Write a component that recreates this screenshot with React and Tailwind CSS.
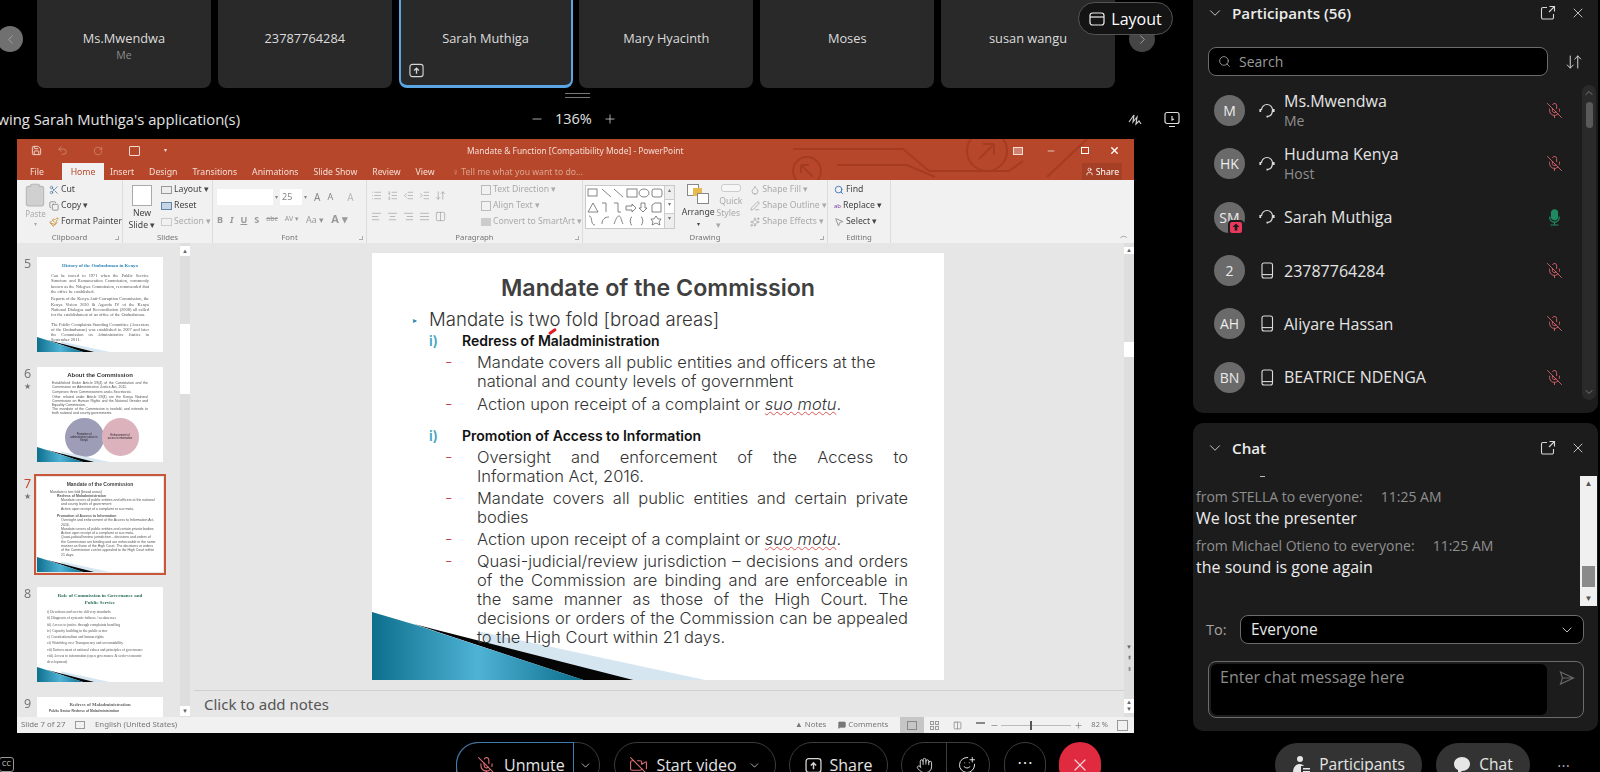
import {
  AlignCenter, AlignJustify, AlignLeft, AlignRight, ArrowDownUp, ChevronDown, ChevronLeft, ChevronRight,
  Clipboard, Columns2, Copy, Hand, IndentDecrease, IndentIncrease, List, ListOrdered, MicOff,
  Minus, MousePointer2, Paintbrush, Plus, Save, Scissors, Search, SmilePlus, Undo2, RotateCw, VideoOff, X,
  MessageSquare, Droplet, PenLine, Sparkles, User,
} from 'lucide-react';

const participants = [
  { initials: 'M', name: 'Ms.Mwendwa', sub: 'Me', device: 'headset' },
  { initials: 'HK', name: 'Huduma Kenya', sub: 'Host', device: 'headset' },
  { initials: 'SM', name: 'Sarah Muthiga', device: 'headset', sharing: true, live: true },
  { initials: '2', name: '23787764284', device: 'phone' },
  { initials: 'AH', name: 'Aliyare Hassan', device: 'phone' },
  { initials: 'BN', name: 'BEATRICE NDENGA', device: 'phone' },
];

const slideLines = [
  { kind: 'lead', text: 'Mandate is two fold [broad areas]' },
  { kind: 'head', text: 'Redress of Maladministration' },
  { kind: 'item', text: 'Mandate covers all public entities and officers at the', dash: true, gap: 'mt-[3px]' },
  { kind: 'item', text: 'national and county levels of government' },
  { kind: 'motu', dash: true, gap: 'mt-[4px]' },
  { kind: 'head', text: 'Promotion of Access to Information', gap: 'mt-[12px]' },
  { kind: 'item', text: 'Oversight and enforcement of the Access to', dash: true, wide: true, gap: 'mt-[3px]' },
  { kind: 'item', text: 'Information Act, 2016.' },
  { kind: 'item', text: 'Mandate covers all public entities and certain private', dash: true, wide: true, gap: 'mt-[3px]' },
  { kind: 'item', text: 'bodies' },
  { kind: 'motu', dash: true, gap: 'mt-[3px]' },
  { kind: 'item', text: 'Quasi-judicial/review jurisdiction – decisions and orders', dash: true, wide: true, gap: 'mt-[3px]' },
  { kind: 'item', text: 'of the Commission are binding and are enforceable in', wide: true },
  { kind: 'item', text: 'the same manner as those of the High Court. The', wide: true },
  { kind: 'item', text: 'decisions or orders of the Commission can be appealed', wide: true },
  { kind: 'item', text: 'to the High Court within 21 days.' },
];

function PopOut() {
  return (
    <svg width="16" height="16" viewBox="0 0 16 16" fill="none" stroke="#d8d8d8" strokeWidth="1.1">
      <path d="M7 2.500H3a1.500 1.500 0 0 0-1.500 1.500v8.500A1.500 1.500 0 0 0 3 14h9a1.500 1.500 0 0 0 1.500-1.500V9" />
      <path d="M9.500 1.500h5v5M14.500 1.500 9 7" />
    </svg>
  );
}

function Headset() {
  return (
    <svg width="16" height="18" viewBox="0 0 16 18" fill="none" stroke="#dcdcdc" strokeWidth="1.2">
      <path d="M2.500 8a5.500 5.500 0 0 1 11 0c0 3.500-1.800 6-4.500 6.400" />
      <path d="M1.300 7v3M14.700 7v3" strokeWidth="1.8" />
      <path d="M7.500 14.600h1.600" strokeWidth="1.8" />
    </svg>
  );
}

function Phone() {
  return (
    <svg width="14" height="17" viewBox="0 0 14 17" fill="none" stroke="#dcdcdc" strokeWidth="1.1">
      <rect x="2" y="1" width="10.500" height="15" rx="2" />
      <path d="M2 12.600h10.500" />
    </svg>
  );
}

function LiveMic() {
  return (
    <svg width="17" height="17" viewBox="0 0 17 17" fill="none" stroke="#1f8a62" strokeWidth="1.2">
      <rect x="5.500" y="0.800" width="6" height="10" rx="3" fill="#1f8a62" />
      <path d="M3.800 7.500v1a4.700 4.700 0 0 0 9.400 0v-1M8.500 13.200v2.500M4.500 16h8" />
    </svg>
  );
}

function ShareBox({ size = 15, color = '#d5d5d5' }) {
  return (
    <svg width={size} height={size} viewBox="0 0 16 16" fill="none" stroke={color} strokeWidth="1.2">
      <rect x="1" y="1.500" width="14" height="13" rx="2.500" />
      <path d="M8 11.500V5.500M5.500 8 8 5.500 10.500 8" strokeWidth="1.4" />
    </svg>
  );
}

function Card({ name, sub, selected, sharing }) {
  return (
    <div
      className={`relative flex h-full w-[174px] flex-col items-center rounded-b-[8px] bg-[#292929] pt-[29px] ${
        selected ? 'border-x-[2.5px] border-b-[3px] border-[#5aa5e2]' : ''
      }`}
    >
      <div className="text-[12.8px] leading-[18px] text-[#dcdcdc]">{name}</div>
      <div className="text-[10.5px] leading-[16px] text-[#8d8d8d]">{sub}</div>
      {sharing && (
        <div className="absolute bottom-[7px] left-[8px]">
          <ShareBox />
        </div>
      )}
    </div>
  );
}

function NavArrow({ side }) {
  const Icon = side === 'left' ? ChevronLeft : ChevronRight;
  return (
    <div
      className={`absolute top-[26px] flex h-[26px] w-[26px] items-center justify-center rounded-full ${
        side === 'left' ? 'left-[-3px] bg-[#707070]' : 'left-[1129px] bg-[#454545]'
      }`}
    >
      <Icon size={15} color="#a8a8a8" strokeWidth={1.4} />
    </div>
  );
}

// ---- PowerPoint window (blurry video frame of a shared app)

function TitleBar() {
  return (
    <div className="relative flex h-[24px] items-center text-[#f3dcd4]">
      <svg className="absolute left-[740px] top-0" width="377" height="41" viewBox="0 0 377 41" fill="none" stroke="#a53c22" strokeWidth="2">
        <circle cx="50" cy="32" r="14" />
        <path d="M44 26l12 12M44 26h8M44 26v8" />
        <circle cx="230" cy="12" r="20" />
        <path d="M222 20l15-15M237 5h-11M237 5v11" />
        <path d="M36 10h110l26 22h80l14-10M80 26h70l28 12M290 38l40-38" />
      </svg>
      <div className="relative flex w-full items-center">
        <Save size={11} className="ml-[14px]" />
        <Undo2 size={11} className="ml-[15px] opacity-40" />
        <RotateCw size={10} className="ml-[25px] opacity-40" />
        <div className="ml-[26px] h-[10px] w-[11px] rounded-[1px] border border-[#f3dcd4]" />
        <div className="ml-[24px] text-[6px]">▾</div>
        <div className="ml-[300px] w-[240px] whitespace-nowrap text-[8.4px]">Mandate &amp; Function [Compatibility Mode] - PowerPoint</div>
        <div className="ml-[306px] h-[8px] w-[10px] border border-[#f3dcd4] bg-[#f3dcd4]/40" />
        <Minus size={10} className="ml-[23px]" />
        <div className="ml-[25px] h-[7px] w-[8px] border border-white" />
        <X size={11} strokeWidth={3} className="ml-[20px] text-white" />
      </div>
    </div>
  );
}

function TabBar() {
  const tabs = ['Insert', 'Design', 'Transitions', 'Animations', 'Slide Show', 'Review', 'View'];
  return (
    <div className="relative flex h-[17px] items-end text-[8.7px] leading-[16px] text-[#f4ddd5]">
      <div className="ml-[13px] w-[32px]">File</div>
      <div className="flex h-[17px] w-[42px] items-center justify-center bg-[#f1f1f1] text-[#b7472a]">Home</div>
      <div className="ml-[6px] flex gap-[15px]">
        {tabs.map((tab) => (
          <span key={tab}>{tab}</span>
        ))}
      </div>
      <span className="ml-[18px] text-[#dba693]">♀ Tell me what you want to do...</span>
      <div className="absolute right-[12px] top-0 flex h-[17px] w-[40px] items-center justify-center gap-[2px] bg-[#a53f26] text-white">
        <User size={9} />
        Share
      </div>
    </div>
  );
}

function RibbonGroup({ width, label, children, corner }) {
  return (
    <div className={`relative flex ${width} flex-col border-r border-[#dcdcdc]`}>
      <div className="flex h-[51px] pt-[2px]">{children}</div>
      <div className="h-[12px] text-center text-[7.8px] leading-[12px] text-[#777]">{label}</div>
      {corner && <div className="absolute bottom-[3px] right-[3px] h-[4px] w-[4px] border-b border-r border-[#aaa]" />}
    </div>
  );
}

function RibbonRow({ icon, text, muted }) {
  return (
    <div className={`flex h-[16px] items-center gap-[2px] whitespace-nowrap text-[8.7px] ${muted ? 'text-[#aaa]' : 'text-[#444]'}`}>
      {icon}
      {text}
    </div>
  );
}

function ShapesGallery() {
  return (
    <div className="flex h-[44px] w-[90px] border border-[#c9c9c9] bg-white">
      <svg width="78" height="42" viewBox="0 0 78 42" fill="none" stroke="#666" strokeWidth="0.8">
        <rect x="2" y="3" width="9" height="7" />
        <path d="M16 3l9 8M28 3l9 8" />
        <rect x="41" y="3" width="10" height="8" />
        <ellipse cx="58" cy="7" rx="5" ry="4" />
        <rect x="66" y="3" width="10" height="8" rx="2" />
        <path d="M2 26l5-9 5 9zM16 17h4v9M28 17h4v9h3" />
        <path d="M40 20h6v-2l4 4-4 4v-2h-6zM55 17h4v5h2l-4 4-4-4h2z" />
        <path d="M66 26v-7l3-2h6v9z" />
        <path d="M3 30c4 0 1 9 6 9M16 38c0-5 3-7 7-7M28 38c2-5 3-8 5-8s2 4 4 8M46 31c-2 0-1 3-2 4 1 1 0 4 2 4M55 31c2 0 1 3 2 4-1 1 0 4-2 4M70 30l2 3h3l-2 3 1 3-4-2-4 2 1-3-2-3h3z" />
      </svg>
      <div className="flex flex-1 flex-col border-l border-[#ccc] bg-[#eee] text-center text-[6px] text-[#777]">
        <span className="h-[14px] border-b border-[#ccc]">▴</span>
        <span className="h-[14px] border-b border-[#ccc] bg-white">▾</span>
        <span>▾</span>
      </div>
    </div>
  );
}

function Ribbon() {
  const iconGray = { size: 11, color: '#9b9b9b', strokeWidth: 1.4 };
  return (
    <div className="flex h-[63px] bg-[#f1f1f1]">
      <RibbonGroup width="w-[106px]" label="Clipboard" corner>
        <div className="flex w-[33px] flex-col items-center pl-[5px] text-[8px] leading-[11px] text-[#aaa]">
          <Clipboard size={26} color="#b8b8b8" fill="#d0d0d0" strokeWidth={1} />
          <span>Paste</span>
          <span className="text-[6px]">▾</span>
        </div>
        <div>
          <RibbonRow icon={<Scissors size={10} color="#6083a8" />} text="Cut" />
          <RibbonRow icon={<Copy size={10} color="#888" />} text="Copy  ▾" />
          <RibbonRow icon={<Paintbrush size={10} color="#c68a2e" />} text="Format Painter" />
        </div>
      </RibbonGroup>
      <RibbonGroup width="w-[90px]" label="Slides">
        <div className="flex w-[38px] flex-col items-center text-[8.7px] leading-[12px] text-[#444]">
          <div className="mb-[1px] mt-[3px] h-[21px] w-[20px] border border-[#aaa] bg-white" />
          <span>New</span>
          <span>Slide ▾</span>
        </div>
        <div>
          <RibbonRow icon={<div className="h-[8px] w-[11px] border border-[#999] bg-[#eee]" />} text="Layout ▾" />
          <RibbonRow icon={<div className="h-[8px] w-[11px] border border-[#6083a8] bg-[#c6d6e6]" />} text="Reset" />
          <RibbonRow muted icon={<div className="h-[8px] w-[11px] border border-[#ccc]" />} text="Section ▾" />
        </div>
      </RibbonGroup>
      <RibbonGroup width="w-[154px]" label="Font" corner>
        <div className="pl-[4px] pt-[7px]">
          <div className="flex items-center gap-[2px] text-[9px] text-[#888]">
            <div className="h-[16px] w-[56px] bg-white" />
            <span className="text-[6px]">▾</span>
            <div className="h-[16px] w-[22px] bg-white pl-[2px] leading-[16px]">25</div>
            <span className="text-[6px]">▾</span>
            <span className="ml-[5px] text-[10px]">A</span>
            <span className="ml-[5px] text-[9px]">A</span>
            <span className="ml-[12px] text-[10px] text-[#bbb]">A</span>
          </div>
          <div className="mt-[6px] flex items-center gap-[7px] text-[9px] font-bold text-[#999]">
            <span>B</span>
            <span className="italic">I</span>
            <span className="underline">U</span>
            <span>S</span>
            <span className="text-[7px] font-normal line-through">abc</span>
            <span className="text-[7px] font-normal">AV ▾</span>
            <span className="font-normal">Aa ▾</span>
            <span className="text-[11px]">A ▾</span>
          </div>
        </div>
      </RibbonGroup>
      <RibbonGroup width="w-[216px]" label="Paragraph" corner>
        <div className="pl-[4px] pt-[8px]">
          <div className="flex gap-[5px]">
            <List {...iconGray} />
            <ListOrdered {...iconGray} />
            <IndentDecrease {...iconGray} />
            <IndentIncrease {...iconGray} />
            <ArrowDownUp {...iconGray} />
          </div>
          <div className="mt-[10px] flex gap-[5px]">
            <AlignLeft {...iconGray} />
            <AlignCenter {...iconGray} />
            <AlignRight {...iconGray} />
            <AlignJustify {...iconGray} />
            <Columns2 {...iconGray} />
          </div>
        </div>
        <div className="pl-[35px]">
          <RibbonRow muted icon={<div className="h-[10px] w-[10px] border border-[#bbb]" />} text="Text Direction ▾" />
          <RibbonRow muted icon={<div className="h-[10px] w-[10px] border border-[#bbb]" />} text="Align Text ▾" />
          <RibbonRow muted icon={<div className="h-[8px] w-[10px] bg-[#ccc]" />} text="Convert to SmartArt ▾" />
        </div>
      </RibbonGroup>
      <RibbonGroup width="w-[245px]" label="Drawing" corner>
        <div className="pl-[2px] pt-[3px]">
          <ShapesGallery />
        </div>
        <div className="ml-[5px] flex w-[38px] flex-col items-center text-[8.7px] leading-[12px] text-[#444]">
          <div className="relative mb-[2px] mt-[2px] h-[20px] w-[22px]">
            <div className="h-[12px] w-[12px] border border-[#888] bg-white" />
            <div className="absolute left-[6px] top-[4px] h-[8px] w-[9px] bg-[#e8b94e]" />
            <div className="absolute bottom-0 right-0 h-[11px] w-[12px] border border-[#888] bg-white" />
          </div>
          <span>Arrange</span>
          <span className="text-[6px]">▾</span>
        </div>
        <div className="flex w-[30px] flex-col items-center text-[8.7px] leading-[12px] text-[#aaa]">
          <div className="mb-[3px] mt-[2px] h-[20px] w-[20px] rounded-[3px] border border-[#ccc] bg-[#f7f7f7]" />
          <span>Quick</span>
          <span>Styles ▾</span>
        </div>
        <div className="pl-[5px]">
          <RibbonRow muted icon={<Droplet size={10} color="#aaa" />} text="Shape Fill ▾" />
          <RibbonRow muted icon={<PenLine size={10} color="#aaa" />} text="Shape Outline ▾" />
          <RibbonRow muted icon={<Sparkles size={10} color="#aaa" />} text="Shape Effects ▾" />
        </div>
      </RibbonGroup>
      <RibbonGroup width="w-[63px]" label="Editing">
        <div className="pl-[6px]">
          <RibbonRow icon={<Search size={10} color="#2b6cb0" />} text="Find" />
          <RibbonRow icon={<span className="text-[6px] leading-none text-[#7a3ea0]">ab</span>} text="Replace ▾" />
          <RibbonRow icon={<MousePointer2 size={10} color="#888" />} text="Select ▾" />
        </div>
      </RibbonGroup>
      <div className="flex flex-1 items-end justify-end pb-[2px] pr-[6px] text-[8px] text-[#777]">︿</div>
    </div>
  );
}

function Swoosh() {
  return (
    <svg className="absolute bottom-0 left-0 h-[16%] w-[58.5%]" viewBox="0 0 334 68" preserveAspectRatio="none">
      <defs>
        <linearGradient id="teal" x1="0" x2="1" y1="0" y2="0">
          <stop offset="0" stopColor="#0d6f8c" />
          <stop offset="0.5" stopColor="#4fb3d6" />
          <stop offset="1" stopColor="#0b6d8a" />
        </linearGradient>
      </defs>
      <polygon points="105,19 334,68 150,68" fill="#d5e6f1" />
      <polygon points="42,12 262,68 212,68" fill="#050505" />
      <polygon points="0,0 44,13 212,68 0,68" fill="url(#teal)" />
    </svg>
  );
}

function Thumb({ number, star, active, children, height = 'h-[95px]' }) {
  return (
    <div className="flex">
      <div className="w-[20px] pl-[7px] text-[12.5px] leading-[14px]">
        <div className={active ? 'text-[#c0482c]' : 'text-[#777]'}>{number}</div>
        {star && <div className="text-[8px] leading-[10px] text-[#777]">★</div>}
      </div>
      <div
        className={`relative ${height} w-[126px] overflow-hidden bg-white font-['Liberation_Sans',sans-serif] text-[#555] ${
          active ? 'outline-2 outline-offset-[1px] outline-[#c8573a]' : ''
        }`}
      >
        {children}
      </div>
    </div>
  );
}

function ThumbPane() {
  return (
    <div className="relative flex h-[474px] w-[177px] flex-col gap-[15px] overflow-hidden bg-[#e6e6e6] pt-[14px]">
      <div className="absolute right-[4px] top-0 z-10 flex h-full w-[10px] flex-col justify-between bg-[#dedede] text-center text-[6px] text-[#666]">
        <span className="mt-[3px] h-[10px] bg-white leading-[10px]">▲</span>
        <span className="mb-[1px] h-[10px] bg-white leading-[10px]">▼</span>
        <span className="absolute left-0 top-[81px] h-[70px] w-[10px] bg-white" />
      </div>
      <Thumb number="5">
        <div className="pt-[5px] text-center font-['Liberation_Serif',serif] text-[4.8px] font-bold text-[#2f86b3]">History of the Ombudsman in Kenya</div>
        <div className="px-[14px] pt-[4px] text-justify font-['Liberation_Serif',serif] text-[4.4px] leading-[5.300px]">
          <p>Can be traced to 1971 when the Public Service Structure and Remuneration Commission, commonly known as the Ndegwa Commission, recommended that the office be established.</p>
          <p className="mt-[2px]">Reports of the Kenya Anti-Corruption Commission, the Kenya Vision 2030 &amp; Agenda IV of the Kenya National Dialogue and Reconciliation (2008) all called for the establishment of an office of the Ombudsman.</p>
          <p className="mt-[4px]">The Public Complaints Standing Committee (Ancestors of the Ombudsman) was established in 2007 and later the Commission on Administrative Justice in September 2011.</p>
        </div>
        <Swoosh />
      </Thumb>
      <Thumb number="6" star>
        <div className="pt-[4px] text-center text-[6px] font-bold text-[#333]">About the Commission</div>
        <div className="px-[15px] pt-[2px] text-justify text-[3.5px] leading-[3.9px]">
          <p>Established Under Article 59(4) of the Constitution and the Commission on Administrative Justice Act, 2011.</p>
          <p className="mt-[1px]">Comprises three Commissioners and a Secretariat.</p>
          <p className="mt-[1px]">Other related under Article 59(4) are the Kenya National Commission on Human Rights and the National Gender and Equality Commission.</p>
          <p className="mt-[1px]">The mandate of the Commission is twofold, and extends to both national and county governments.</p>
        </div>
        <div className="mt-[2px] flex justify-center pl-[3px]">
          <div className="flex h-[39px] w-[39px] items-center rounded-full bg-[#9d9db8] p-[6px] text-center text-[2.6px] leading-[3px] text-[#222]">Promotion of administrative justice in Kenya</div>
          <div className="-ml-[2px] flex h-[38px] w-[37px] items-center rounded-full bg-[#dcb2bd] p-[6px] text-center text-[2.6px] leading-[3px] text-[#222]">Enhancement of access to information</div>
        </div>
        <Swoosh />
      </Thumb>
      <Thumb number="7" star active>
        <div className="pt-[4px] text-center text-[5px] font-bold text-[#444]">Mandate of the Commission</div>
        <div className="pl-[13px] pr-[7px] pt-[1px] text-[3.500px] leading-[4.300px]">
          <p>Mandate is two fold [broad areas]</p>
          <p className="pl-[7px] font-bold">Redress of Maladministration</p>
          <p className="pl-[11px]">Mandate covers all public entities and officers at the national and county levels of government</p>
          <p className="pl-[11px]">Action upon receipt of a complaint or suo motu.</p>
          <p className="mt-[3px] pl-[7px] font-bold">Promotion of Access to Information</p>
          <p className="pl-[11px]">Oversight and enforcement of the Access to Information Act, 2016.</p>
          <p className="pl-[11px]">Mandate covers all public entities and certain private bodies</p>
          <p className="pl-[11px]">Action upon receipt of a complaint or suo motu.</p>
          <p className="pl-[11px]">Quasi-judicial/review jurisdiction – decisions and orders of the Commission are binding and are enforceable in the same manner as those of the High Court. The decisions or orders of the Commission can be appealed to the High Court within 21 days.</p>
        </div>
        <Swoosh />
      </Thumb>
      <Thumb number="8">
        <div className="px-[8px] pt-[5px] text-center font-['Liberation_Serif',serif] text-[5px] font-bold leading-[7px] text-[#2e6f5e]">Role of Commission in Governance and<br />Public Service</div>
        <div className="pl-[10px] pr-[4px] pt-[3px] font-['Liberation_Serif',serif] text-[3.7px] leading-[6.3px]">
          <p>i) Devotions and service delivery standards</p>
          <p>ii) Diagnosis of systemic failures / weaknesses</p>
          <p>iii) Access to justice through complaints handling</p>
          <p>iv) Capacity building in the public sector</p>
          <p>v) Constitutionalism and human rights</p>
          <p>vi) Watchdog over Transparency and accountability</p>
          <p>vii) Enforcement of national values and principles of governance</p>
          <p>viii) Access to information (open governance &amp; socio-economic development)</p>
        </div>
        <Swoosh />
      </Thumb>
      <Thumb number="9" height="h-[40px]">
        <div className="pt-[4px] text-center font-['Liberation_Serif',serif] text-[4.8px] font-bold text-[#666]">Redress of Maladministration</div>
        <div className="pl-[12px] pt-[1px] text-[3.4px] font-bold">Public Sector Redress of Maladministration</div>
      </Thumb>
    </div>
  );
}

function SuoMotu() {
  return (
    <span>
      Action upon receipt of a complaint or <span className="italic underline decoration-[#d55] decoration-wavy decoration-1">suo motu</span>.
    </span>
  );
}

function SlideLine({ line }) {
  const gap = line.gap || '';
  if (line.kind === 'lead') {
    return (
      <div className={`flex h-[22px] items-center pl-[41px] text-[18.6px] font-light text-[#333] ${gap}`}>
        <span className="w-[16px] text-[8px] text-[#2f86a8]">▸</span>
        {line.text}
      </div>
    );
  }
  if (line.kind === 'head') {
    return (
      <div className={`flex h-[19px] items-center pl-[57px] text-[14px] font-semibold text-[#111] ${gap}`}>
        <span className="w-[33px] text-[#3fa6c6]">i)</span>
        {line.text}
      </div>
    );
  }
  return (
    <div className={`flex h-[19px] items-center pl-[73px] text-[16.500px] font-light text-[#333] ${gap}`}>
      <span className="w-[32px] text-[#c8404a]">{line.dash ? '-' : ''}</span>
      <span
        className={`block w-[431px] whitespace-nowrap ${line.wide ? 'text-justify [text-align-last:justify] [white-space:normal]' : ''}`}
      >
        {line.kind === 'motu' ? <SuoMotu /> : line.text}
      </span>
    </div>
  );
}

function MainSlide() {
  return (
    <div className="relative h-[427px] w-[572px] bg-white font-['Inter',sans-serif]">
      <Swoosh />
      <div className="relative">
        <div className="pt-[20px] text-center text-[23.200px] font-semibold leading-[30px] text-[#404040]">Mandate of the Commission</div>
        <div className="mt-[6px]">
          {slideLines.map((line) => (
            <SlideLine key={line.text || line.gap + line.kind} line={line} />
          ))}
        </div>
      </div>
      <div className="absolute left-[176px] top-[77px] h-[3px] w-[9px] -rotate-[35deg] rounded-full bg-[#e01b24]" />
      <div className="absolute left-[398px] top-[121px] h-[10px] w-px bg-[#555]" />
    </div>
  );
}

function StatusBar() {
  const iconSize = { size: 9, color: '#888' };
  return (
    <div className="flex h-[16px] items-center whitespace-nowrap bg-[#f1f1f1] pl-[4px] text-[7.8px] text-[#777]">
      <span className="w-[54px]">Slide 7 of 27</span>
      <div className="h-[8px] w-[10px] border border-[#999]" />
      <span className="ml-[10px] w-[75px]">English (United States)</span>
      <span className="ml-[625px] flex items-center gap-[2px]">▲ Notes</span>
      <span className="ml-[12px] flex items-center gap-[2px]"><MessageSquare size={8} fill="#777" color="#777" /> Comments</span>
      <div className="ml-[12px] flex h-[16px] w-[24px] items-center justify-center bg-[#c6c6c6]">
        <div className="h-[9px] w-[10px] border border-[#888]" />
      </div>
      <div className="ml-[6px] grid h-[9px] w-[9px] grid-cols-2 gap-[1px]">
        <span className="border border-[#999]" />
        <span className="border border-[#999]" />
        <span className="border border-[#999]" />
        <span className="border border-[#999]" />
      </div>
      <Columns2 {...iconSize} className="ml-[14px]" />
      <div className="ml-[14px] h-[6px] w-[9px] border-t-2 border-[#888]" />
      <Minus {...iconSize} className="ml-[5px]" />
      <div className="relative ml-[2px] h-px w-[70px] bg-[#bbb]">
        <div className="absolute left-[29px] top-[-4px] h-[9px] w-[2px] bg-[#555]" />
      </div>
      <Plus {...iconSize} className="ml-[3px]" />
      <span className="ml-[8px] text-[7.5px]">82 %</span>
      <div className="ml-[9px] h-[11px] w-[11px] border border-[#999]" />
    </div>
  );
}

function WorkArea() {
  return (
    <div className="relative flex h-[474px] flex-1 flex-col bg-[#e6e6e6]">
      <div className="absolute bottom-0 right-0 top-0 z-10 flex w-[10px] flex-col bg-[#dedede] text-center text-[6px] leading-[7px] text-[#666]">
        <span className="mt-[4px] bg-white">▲</span>
        <span className="mt-[88px] h-[15px] bg-white" />
        <span className="mt-[287px]">▼</span>
        <span className="mt-[4px]">⇞</span>
        <span className="mt-[4px]">⇟</span>
        <span className="mt-[26px] h-[7px] bg-white">▲</span>
        <span className="h-[7px] bg-white">▼</span>
      </div>
      <div className="h-[447px] pl-[178px] pt-[10px]">
        <MainSlide />
      </div>
      <div className="h-[27px] border-t border-[#d0d0d0] pl-[10px] text-[15px] leading-[26px] text-[#555]">Click to add notes</div>
    </div>
  );
}

function PowerPoint() {
  return (
    <div className="ml-[17px] h-[594px] w-[1117px] font-['Noto_Sans',sans-serif] blur-[0.5px]">
      <div className="h-[41px] bg-[#b7472a]">
        <TitleBar />
        <TabBar />
      </div>
      <Ribbon />
      <div className="flex h-[474px]">
        <ThumbPane />
        <WorkArea />
      </div>
      <StatusBar />
    </div>
  );
}

// ---- Webex-style chrome around it

function Pill({ width, children, className = '' }) {
  return (
    <div className={`relative flex h-[46px] ${width} items-center justify-center rounded-full border border-[#3c3c3c] text-[16px] text-[#e4e4e4] ${className}`}>
      {children}
    </div>
  );
}

function BottomBar() {
  return (
    <div className="mt-[9px] flex pl-[456px]">
      <Pill width="w-[144px]" className="justify-start pl-[20px]">
        <div className="absolute bottom-0 left-[-1px] top-[-1px] w-[118px] rounded-tl-[22px] border-r border-t border-l border-[#3f7cb3]" />
        <MicOff size={19} color="#dc6d74" strokeWidth={1.4} />
        <span className="ml-[8px]">Unmute</span>
        <ChevronDown size={13} strokeWidth={1.4} className="ml-[14px]" />
      </Pill>
      <Pill width="w-[162px]" className="ml-[14px]">
        <VideoOff size={19} color="#dc6d74" strokeWidth={1.4} />
        <span className="ml-[8px]">Start video</span>
        <ChevronDown size={13} strokeWidth={1.4} className="ml-[11px]" />
      </Pill>
      <Pill width="w-[99px]" className="ml-[13px]">
        <ShareBox size={17} />
        <span className="ml-[8px]">Share</span>
      </Pill>
      <Pill width="w-[89px]" className="ml-[13px] gap-[25px]">
        <Hand size={17} strokeWidth={1.3} />
        <div className="absolute left-[44px] top-[0px] h-[32px] w-px bg-[#3c3c3c]" />
        <SmilePlus size={18} strokeWidth={1.3} />
      </Pill>
      <Pill width="w-[42px]" className="ml-[14px] pb-[6px]">⋯</Pill>
      <div className="ml-[13px] flex h-[46px] w-[42px] items-center justify-center rounded-full bg-[#e02a3f]">
        <X size={20} color="#f5d5d8" strokeWidth={1.5} />
      </div>
    </div>
  );
}

function MainColumn() {
  const cards = [
    { name: 'Ms.Mwendwa', sub: 'Me' },
    { name: '23787764284' },
    { name: 'Sarah Muthiga', selected: true, sharing: true },
    { name: 'Mary Hyacinth' },
    { name: 'Moses' },
    { name: 'susan wangu' },
  ];
  return (
    <div className="relative w-[1193px] shrink-0">
      <div className="flex h-[88px] gap-[6.8px] pl-[37px]">
        {cards.map((card) => (
          <Card key={card.name} {...card} />
        ))}
      </div>
      <NavArrow side="left" />
      <NavArrow side="right" />
      <div className="absolute left-[1078px] top-[2px] flex h-[33px] w-[95px] items-center justify-center gap-[6px] rounded-full border border-[#555] bg-[#141414] text-[16px] text-white">
        <svg width="16" height="14" viewBox="0 0 16 14" fill="none" stroke="#eee" strokeWidth="1.2">
          <rect x="1" y="1" width="14" height="12" rx="2.500" />
          <path d="M1 5h14" />
        </svg>
        Layout
      </div>
      <div className="flex h-[51px] flex-col">
        <div className="ml-[565px] mt-[5px] h-[5px] w-[25px] border-y border-[#777]" />
        <div className="mt-[9px] flex h-[24px] items-center">
          <div className="w-[240px] overflow-hidden whitespace-nowrap text-right text-[14.800px] text-[#e2e2e2]" dir="rtl">
            <span dir="ltr">Viewing Sarah Muthiga's application(s)</span>
          </div>
          <Minus size={14} color="#ddd" strokeWidth={1.3} className="ml-[290px]" />
          <span className="ml-[11px] text-[14.500px] text-[#e2e2e2]">136%</span>
          <Plus size={14} color="#ddd" strokeWidth={1.3} className="ml-[11px]" />
          <svg className="ml-[511px]" width="15" height="15" viewBox="0 0 15 15" fill="none" stroke="#ccc" strokeWidth="1.2">
            <path d="M1 10 6 3l-1 7 4-5-1 7 3-3 2 3" />
          </svg>
          <svg className="ml-[20px]" width="18" height="17" viewBox="0 0 18 17" fill="none" stroke="#ddd" strokeWidth="1.2">
            <rect x="2" y="1.500" width="14" height="11" rx="2" />
            <path d="M6 15.500h6M9 5v4l2-1" />
          </svg>
        </div>
      </div>
      <PowerPoint />
      <BottomBar />
      <div className="absolute left-[-1px] top-[757px] flex h-[15px] w-[15px] items-center justify-center rounded-[3px] border border-[#999] text-[7px] text-[#ddd]">CC</div>
    </div>
  );
}

function PanelHeader({ title }) {
  return (
    <div className="flex h-[26px] items-center pl-[13px] pr-[12px]">
      <ChevronDown size={18} color="#d8d8d8" strokeWidth={1.2} />
      <span className="ml-[8px] text-[15.200px] font-semibold text-[#ececec]">{title}</span>
      <div className="ml-auto">
        <PopOut />
      </div>
      <X size={16} color="#d8d8d8" strokeWidth={1.3} className="ml-[14px]" />
    </div>
  );
}

function ParticipantRow({ person }) {
  return (
    <div className="flex h-[53.300px] items-center pl-[21px]">
      <div className="relative flex h-[31px] w-[31px] items-center justify-center rounded-full bg-[#6a6a6a] text-[14px] text-[#ececec]">
        {person.initials}
        {person.sharing && (
          <div className="absolute left-[14px] top-[18px] flex h-[15px] w-[16px] items-center justify-center rounded-[4px] border-2 border-[#1c1c1c] bg-[#e8395c]">
            <svg width="8" height="8" viewBox="0 0 8 8" fill="#1c1c1c">
              <path d="M4 0.500 7.500 4H5.300v3.500H2.700V4H.5z" />
            </svg>
          </div>
        )}
      </div>
      <div className="ml-[13px] flex w-[18px] justify-center">
        {person.device === 'headset' ? <Headset /> : <Phone />}
      </div>
      <div className="ml-[8px] w-[262px]">
        <div className="text-[16px] leading-[20px] text-[#e4e4e4]">{person.name}</div>
        {person.sub && <div className="text-[14px] leading-[19px] text-[#8f8f8f]">{person.sub}</div>}
      </div>
      {person.live ? <LiveMic /> : <MicOff size={17} color="#d8616b" strokeWidth={1.3} />}
    </div>
  );
}

function ParticipantsPanel() {
  return (
    <div className="relative h-[413px] shrink-0 rounded-b-[10px] bg-[#1c1c1c]">
      <PanelHeader title="Participants (56)" />
      <div className="mt-[21px] flex items-center pl-[15px]">
        <div className="flex h-[29px] w-[340px] items-center rounded-[8px] border border-[#6b6b6b] bg-black pl-[9px]">
          <Search size={13} color="#b8b8b8" strokeWidth={1.4} />
          <span className="ml-[8px] text-[14px] text-[#9a9a9a]">Search</span>
        </div>
        <ArrowDownUp size={18} color="#d8d8d8" strokeWidth={1.3} className="ml-[17px]" />
      </div>
      <div className="mt-[8px]">
        {participants.map((person) => (
          <ParticipantRow key={person.name} person={person} />
        ))}
      </div>
      <div className="absolute right-[2px] top-[85px] flex h-[315px] w-[14px] flex-col items-center rounded-full bg-[#2a2a2a] pt-[2px] text-[#777]">
        <ChevronDown size={12} className="rotate-180" />
        <div className="mt-[3px] h-[26px] w-[7px] rounded-full bg-[#5a5a5a]" />
        <ChevronDown size={12} className="mt-auto mb-[2px]" />
      </div>
    </div>
  );
}

function ChatMessage({ from, text, gap }) {
  return (
    <div className={gap}>
      <div className="flex h-[22px] items-center text-[14px] text-[#8f8f8f]">
        <span>from {from} to everyone:</span>
        <span className="ml-[18px]">11:25 AM</span>
      </div>
      <div className="h-[22px] text-[16px] leading-[22px] text-[#ececec]">{text}</div>
    </div>
  );
}

function ChatPanel() {
  return (
    <div className="relative h-[308px] shrink-0 rounded-[10px] bg-[#1c1c1c] pt-[12px]">
      <PanelHeader title="Chat" />
      <div className="pl-[3px]">
        <div className="h-[22px] pl-[64px] pt-[3px]">
          <div className="h-px w-[5px] translate-y-[12px] bg-[#bbb]" />
        </div>
        <ChatMessage from="STELLA" text="We lost the presenter" gap="mt-[2px]" />
        <ChatMessage from="Michael Otieno" text="the sound is gone again" gap="mt-[5px]" />
      </div>
      <div className="absolute right-[1px] top-[53px] flex h-[130px] w-[17px] flex-col items-center bg-[#f0f0f0] text-[8px] leading-[12px] text-[#555]">
        <span className="mt-[1px]">▲</span>
        <div className="mt-[77px] h-[21px] w-[13px] bg-[#8a8a8a]" />
        <span className="mt-[5px]">▼</span>
      </div>
      <div className="absolute left-[13px] right-[14px] top-[192px] flex items-center">
        <span className="w-[34px] text-[14.500px] text-[#a5a5a5]">To:</span>
        <div className="flex h-[29px] flex-1 items-center justify-between rounded-[8px] border border-[#6b6b6b] bg-black pl-[10px] pr-[8px] text-[15.500px] text-[#e8e8e8]">
          Everyone
          <ChevronDown size={16} color="#d8d8d8" strokeWidth={1.3} />
        </div>
      </div>
      <div className="absolute left-[15px] top-[238px] flex h-[57px] w-[376px] rounded-[8px] border border-[#6b6b6b] p-[2px]">
        <div className="h-full w-[336px] rounded-[6px] bg-black pl-[9px] pt-[1px] text-[16px] text-[#8c8c8c]">Enter chat message here</div>
        <svg className="ml-[12px] mt-[6px]" width="16" height="16" viewBox="0 0 16 16" fill="none" stroke="#666" strokeWidth="1.2">
          <path d="M1.500 2 14.500 8 1.500 14l2-6zM3.500 8h11" />
        </svg>
      </div>
    </div>
  );
}

function Sidebar() {
  return (
    <div className="flex w-[405px] shrink-0 flex-col">
      <ParticipantsPanel />
      <div className="mt-[10px] shrink-0">
        <ChatPanel />
      </div>
      <div className="mt-[12px] flex shrink-0 pl-[82px] text-[15.500px] text-[#e6e6e6]">
        <div className="flex h-[44px] w-[147px] items-center justify-center gap-[8px] rounded-full bg-[#333]">
          <svg width="19" height="20" viewBox="0 0 19 20" fill="#e6e6e6">
            <circle cx="8" cy="4" r="3" />
            <path d="M1 18c0-6 3-9 7-9 2 0 3 1 4 2H9v7z" />
            <path d="M11 13h7v1.500h-7zM11 16h7v1.500h-7z" />
          </svg>
          Participants
        </div>
        <div className="ml-[14px] flex h-[44px] w-[94px] items-center justify-center gap-[8px] rounded-full bg-[#333]">
          <svg width="18" height="19" viewBox="0 0 18 19" fill="#e6e6e6">
            <path d="M9 1c4.500 0 8 3 8 7s-3.500 7-8 7l-4 3v-4C2.500 13 1 11 1 8c0-4 3.500-7 8-7z" />
          </svg>
          Chat
        </div>
        <div className="ml-[27px] mt-[13px] text-[13px] text-[#aaa]">⋯</div>
      </div>
    </div>
  );
}

export default function App() {
  return (
    <div className="flex h-[772px] w-[1600px] overflow-hidden bg-black font-['Open_Sans',sans-serif]">
      <MainColumn />
      <Sidebar />
    </div>
  );
}
